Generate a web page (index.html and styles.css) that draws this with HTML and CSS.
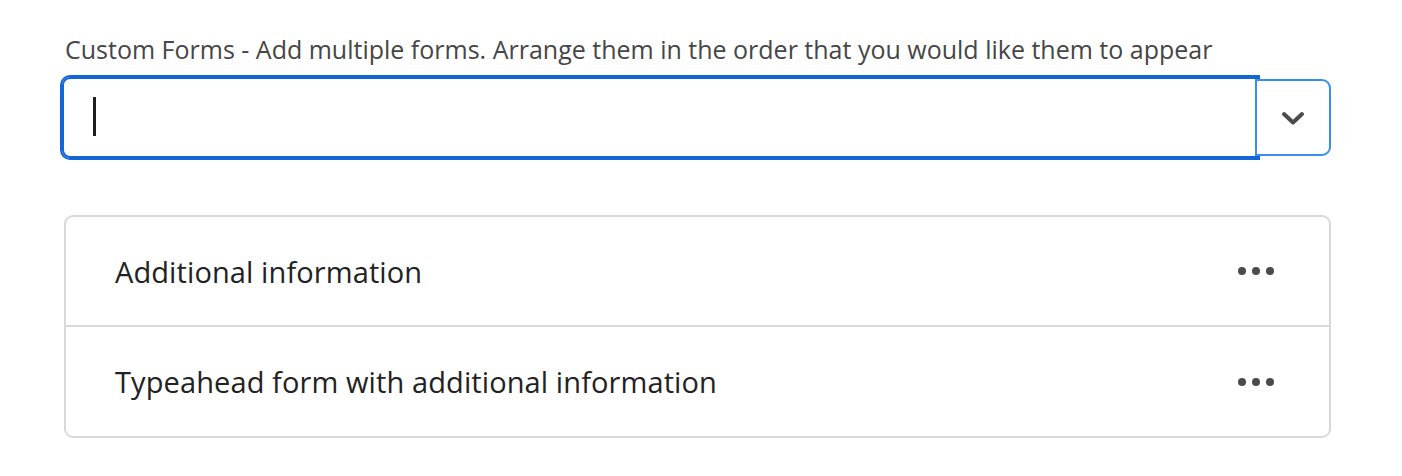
FILE: index.html
```html
<!DOCTYPE html>
<html lang="en">
<head>
<meta charset="utf-8">
<title>Custom Forms</title>
<link rel="stylesheet" href="styles.css">
</head>
<body>
<div class="page">
  <label class="field-label">Custom Forms - Add multiple forms. Arrange them in the order that you would like them to appear</label>
  <div class="combobox">
    <div class="combo-input"><span class="caret"></span></div>
    <button class="combo-button" type="button" aria-label="Show suggestions">
      <svg width="24" height="15" viewBox="0 0 24 15"><path d="M3 3 L12 11.5 L21 3" fill="none" stroke="#4b4b4b" stroke-width="4" stroke-linecap="round" stroke-linejoin="round"/></svg>
    </button>
  </div>
  <ul class="form-list">
    <li class="form-row">
      <span class="form-name">Additional information</span>
      <span class="more" aria-label="More actions"><i></i><i></i><i></i></span>
    </li>
    <li class="form-row">
      <span class="form-name">Typeahead form with additional information</span>
      <span class="more" aria-label="More actions"><i></i><i></i><i></i></span>
    </li>
  </ul>
</div>
</body>
</html>
```

FILE: styles.css
```css
* { box-sizing: border-box; }
html, body { margin: 0; padding: 0; background: #ffffff; }
body { font-family: "Open Sans", "Noto Sans", "Liberation Sans", sans-serif; }

.page {
  padding: 32px 0 0 60px;
  width: 1331px;
}

.field-label {
  display: block;
  margin-left: 5px;
  font-size: 25px;
  line-height: 34px;
  color: #464646;
}

.combobox {
  display: flex;
  align-items: center;
  margin-top: 9px;
  height: 85px;
}

.combo-input {
  flex: 1;
  height: 81px;
  margin: 0 2px;
  border: 2px solid #1366d6;
  border-radius: 8px 0 0 8px;
  box-shadow: 0 0 0 2px #1366d6;
  display: flex;
  align-items: center;
  padding-left: 29px;
}

.caret {
  display: block;
  width: 3px;
  height: 39px;
  margin-top: -2px;
  background: #1f1f1f;
}

.combo-button {
  position: relative;
  z-index: 1;
  margin-left: -5px;
  width: 76px;
  height: 77px;
  border: 2px solid #378ef0;
  border-radius: 0 9px 9px 0;
  background: #ffffff;
  display: flex;
  align-items: center;
  justify-content: center;
  padding: 0;
}

.combo-button svg { display: block; margin-top: 1px; }

.form-list {
  list-style: none;
  margin: 55px 0 0 4px;
  padding: 0;
  border: 2px solid #d9d9d9;
  border-radius: 9px;
}

.form-row {
  display: flex;
  align-items: center;
  justify-content: space-between;
  height: 108px;
  padding: 0 55px 0 49px;
}

.form-row + .form-row {
  border-top: 2px solid #d9d9d9;
  height: 111px;
}

.form-name {
  font-size: 29px;
  color: #222222;
  letter-spacing: 0.1px;
}

.more {
  display: flex;
  gap: 6px;
}

.more i {
  display: block;
  width: 8px;
  height: 8px;
  border-radius: 50%;
  background: #4b4b4b;
}
```
